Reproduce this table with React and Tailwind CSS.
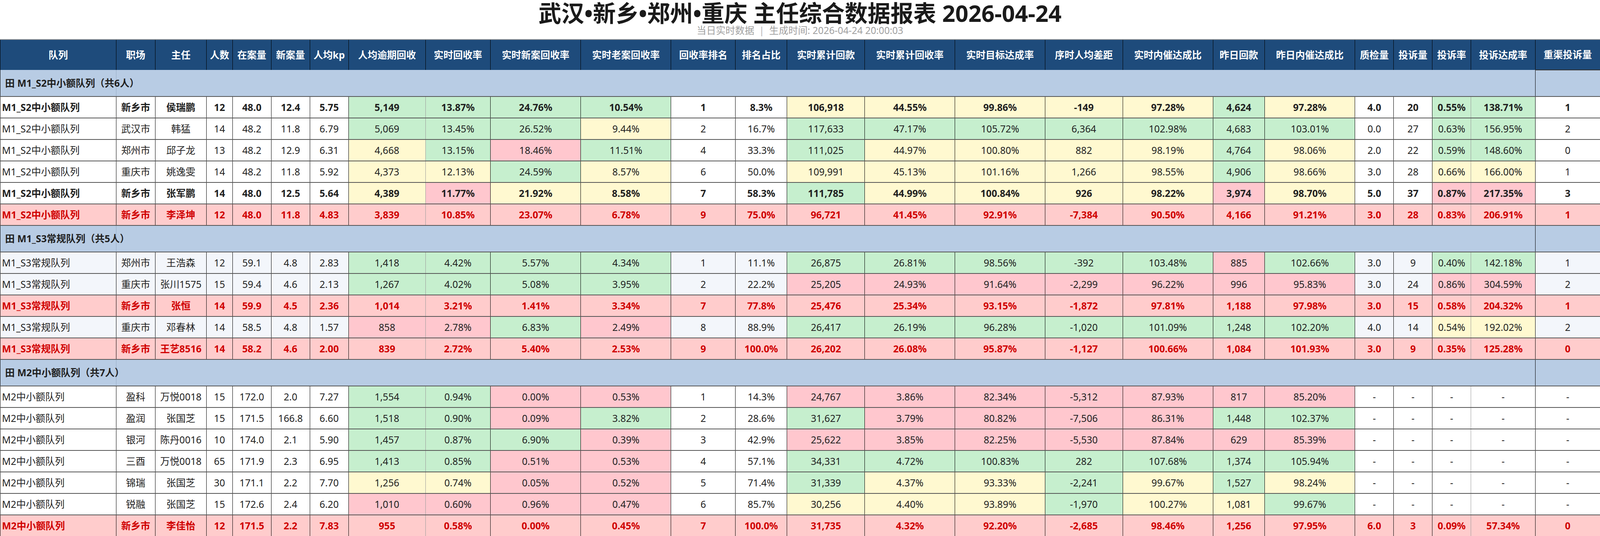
import React from "react";

// 列定义：标题 + 宽度（按 4800 宽的原表换算成百分比）
const COLS = [
  { title: "队列", w: "w-[7.25%]" },
  { title: "职场", w: "w-[2.4375%]" },
  { title: "主任", w: "w-[3.2083%]" },
  { title: "人数", w: "w-[1.625%]" },
  { title: "在案量", w: "w-[2.4167%]" },
  { title: "新案量", w: "w-[2.4167%]" },
  { title: "人均kp", w: "w-[2.4167%]" },
  { title: "人均逾期回收", w: "w-[4.8125%]" },
  { title: "实时回收率", w: "w-[4.0625%]" },
  { title: "实时新案回收率", w: "w-[5.6458%]" },
  { title: "实时老案回收率", w: "w-[5.6458%]" },
  { title: "回收率排名", w: "w-[4.0208%]" },
  { title: "排名占比", w: "w-[3.2292%]" },
  { title: "实时累计回款", w: "w-[4.8542%]" },
  { title: "实时累计回收率", w: "w-[5.6458%]" },
  { title: "实时目标达成率", w: "w-[5.625%]" },
  { title: "序时人均差距", w: "w-[4.8542%]" },
  { title: "实时内催达成比", w: "w-[5.6458%]" },
  { title: "昨日回款", w: "w-[3.2292%]" },
  { title: "昨日内催达成比", w: "w-[5.6458%]" },
  { title: "质检量", w: "w-[2.4167%]" },
  { title: "投诉量", w: "w-[2.4167%]" },
  { title: "投诉率", w: "w-[2.4167%]" },
  { title: "投诉达成率", w: "w-[4.0208%]" },
  { title: "重渠投诉量", w: "w-[4.0417%]" },
];

// 这两列右边框是浅灰色
const SOFT_RIGHT = [7, 22];

const CELL_BG = {
  g: "bg-[#c6efce]",
  y: "bg-[#fff9d0]",
  p: "bg-[#ffc7ce]",
};

// c: 每列底色（. 为默认），kind: bold / red
const GROUPS = [
  {
    name: "M1_S2中小额队列（共6人）",
    tint: false,
    rows: [
      {
        kind: "bold",
        c: ".......gggg..yyyyygy..gg.",
        v: ["M1_S2中小额队列", "新乡市", "侯瑞鹏", "12", "48.0", "12.4", "5.75", "5,149", "13.87%", "24.76%", "10.54%", "1", "8.3%", "106,918", "44.55%", "99.86%", "-149", "97.28%", "4,624", "97.28%", "4.0", "20", "0.55%", "138.71%", "1"],
      },
      {
        c: ".......gggy..ggggggg..gg.",
        v: ["M1_S2中小额队列", "武汉市", "韩猛", "14", "48.2", "11.8", "6.79", "5,069", "13.45%", "26.52%", "9.44%", "2", "16.7%", "117,633", "47.17%", "105.72%", "6,364", "102.98%", "4,683", "103.01%", "0.0", "27", "0.63%", "156.95%", "2"],
      },
      {
        c: ".......ygpg..gyyyygy..gg.",
        v: ["M1_S2中小额队列", "郑州市", "邱子龙", "13", "48.2", "12.9", "6.31", "4,668", "13.15%", "18.46%", "11.51%", "4", "33.3%", "111,025", "44.97%", "100.80%", "882", "98.19%", "4,764", "98.06%", "2.0", "22", "0.59%", "148.60%", "0"],
      },
      {
        c: ".......yygy..yyyyygy..yy.",
        v: ["M1_S2中小额队列", "重庆市", "姚逸雯", "14", "48.2", "11.8", "5.92", "4,373", "12.13%", "24.59%", "8.57%", "6", "50.0%", "109,991", "45.13%", "101.16%", "1,266", "98.55%", "4,906", "98.66%", "3.0", "28", "0.66%", "166.00%", "1"],
      },
      {
        kind: "bold",
        c: ".......ypyy..gyyyypy..pp.",
        v: ["M1_S2中小额队列", "新乡市", "张军鹏", "14", "48.0", "12.5", "5.64", "4,389", "11.77%", "21.92%", "8.58%", "7", "58.3%", "111,785", "44.99%", "100.84%", "926", "98.22%", "3,974", "98.70%", "5.0", "37", "0.87%", "217.35%", "3"],
      },
      {
        kind: "red",
        v: ["M1_S2中小额队列", "新乡市", "李泽坤", "12", "48.0", "11.8", "4.83", "3,839", "10.85%", "23.07%", "6.78%", "9", "75.0%", "96,721", "41.45%", "92.91%", "-7,384", "90.50%", "4,166", "91.21%", "3.0", "28", "0.83%", "206.91%", "1"],
      },
    ],
  },
  {
    name: "M1_S3常规队列（共5人）",
    tint: true,
    rows: [
      {
        c: ".......gggg..gggggpg..gg.",
        v: ["M1_S3常规队列", "郑州市", "王浩森", "12", "59.1", "4.8", "2.83", "1,418", "4.42%", "5.57%", "4.34%", "1", "11.1%", "26,875", "26.81%", "98.56%", "-392", "103.48%", "885", "102.66%", "3.0", "9", "0.40%", "142.18%", "1"],
      },
      {
        c: ".......gggg..ppppppp..pp.",
        v: ["M1_S3常规队列", "重庆市", "张川1575", "15", "59.4", "4.6", "2.13", "1,267", "4.02%", "5.08%", "3.95%", "2", "22.2%", "25,205", "24.93%", "91.64%", "-2,299", "96.22%", "996", "95.83%", "3.0", "24", "0.86%", "304.59%", "2"],
      },
      {
        kind: "red",
        v: ["M1_S3常规队列", "新乡市", "张恒", "14", "59.9", "4.5", "2.36", "1,014", "3.21%", "1.41%", "3.34%", "7", "77.8%", "25,476", "25.34%", "93.15%", "-1,872", "97.81%", "1,188", "97.98%", "3.0", "15", "0.58%", "204.32%", "1"],
      },
      {
        c: ".......ppgp..ggggggg..yy.",
        v: ["M1_S3常规队列", "重庆市", "邓春林", "14", "58.5", "4.8", "1.57", "858", "2.78%", "6.83%", "2.49%", "8", "88.9%", "26,417", "26.19%", "96.28%", "-1,020", "101.09%", "1,248", "102.20%", "4.0", "14", "0.54%", "192.02%", "2"],
      },
      {
        kind: "red",
        v: ["M1_S3常规队列", "新乡市", "王艺8516", "14", "58.2", "4.6", "2.00", "839", "2.72%", "5.40%", "2.53%", "9", "100.0%", "26,202", "26.08%", "95.87%", "-1,127", "100.66%", "1,084", "101.93%", "3.0", "9", "0.35%", "125.28%", "0"],
      },
    ],
  },
  {
    name: "M2中小额队列（共7人）",
    tint: false,
    rows: [
      {
        c: ".......ggpp..ppppppp.....",
        v: ["M2中小额队列", "盈科", "万悦0018", "15", "172.0", "2.0", "7.27", "1,554", "0.94%", "0.00%", "0.53%", "1", "14.3%", "24,767", "3.86%", "82.34%", "-5,312", "87.93%", "817", "85.20%", "-", "-", "-", "-", "-"],
      },
      {
        c: ".......ggpg..gppppgg.....",
        v: ["M2中小额队列", "盈润", "张国芝", "15", "171.5", "166.8", "6.60", "1,518", "0.90%", "0.09%", "3.82%", "2", "28.6%", "31,627", "3.79%", "80.82%", "-7,506", "86.31%", "1,448", "102.37%", "-", "-", "-", "-", "-"],
      },
      {
        c: ".......gggp..ppppppp.....",
        v: ["M2中小额队列", "银河", "陈丹0016", "10", "174.0", "2.1", "5.90", "1,457", "0.87%", "6.90%", "0.39%", "3", "42.9%", "25,622", "3.85%", "82.25%", "-5,530", "87.84%", "629", "85.39%", "-", "-", "-", "-", "-"],
      },
      {
        c: ".......ggpp..ggggggg.....",
        v: ["M2中小额队列", "三酉", "万悦0018", "65", "171.9", "2.3", "6.95", "1,413", "0.85%", "0.51%", "0.53%", "4", "57.1%", "34,331", "4.72%", "100.83%", "282", "107.68%", "1,374", "105.94%", "-", "-", "-", "-", "-"],
      },
      {
        c: ".......yypp..gyygygy.....",
        v: ["M2中小额队列", "锦瑞", "张国芝", "30", "171.1", "2.2", "7.70", "1,256", "0.74%", "0.05%", "0.52%", "5", "71.4%", "31,339", "4.37%", "93.33%", "-2,241", "99.67%", "1,527", "98.24%", "-", "-", "-", "-", "-"],
      },
      {
        c: ".......pppp..yyygyyg.....",
        v: ["M2中小额队列", "锐融", "张国芝", "15", "172.6", "2.4", "6.20", "1,010", "0.60%", "0.96%", "0.47%", "6", "85.7%", "30,256", "4.40%", "93.89%", "-1,970", "100.27%", "1,081", "99.67%", "-", "-", "-", "-", "-"],
      },
      {
        kind: "red",
        v: ["M2中小额队列", "新乡市", "李佳怡", "12", "171.5", "2.2", "7.83", "955", "0.58%", "0.00%", "0.45%", "7", "100.0%", "31,735", "4.32%", "92.20%", "-2,685", "98.46%", "1,256", "97.95%", "6.0", "3", "0.09%", "57.34%", "0"],
      },
    ],
  },
];

function DataRow({ row, tint }) {
  const isRed = row.kind === "red";
  const text = isRed
    ? "font-bold text-[#d00000]"
    : row.kind === "bold"
    ? "font-bold text-[#1f1f1f]"
    : "text-[#222]";

  return (
    <tr className="h-[55px]">
      {row.v.map((val, i) => {
        let bg = tint ? "bg-[#f3f6fb]" : "bg-white";
        if (isRed) bg = "bg-[#ffcccc]";
        else if (row.c && CELL_BG[row.c[i]]) bg = CELL_BG[row.c[i]];

        const right =
          i === COLS.length - 1
            ? ""
            : SOFT_RIGHT.includes(i)
            ? "border-r border-r-[#9a9a9a]"
            : "border-r border-r-black";

        return (
          <td
            key={i}
            className={`${bg} ${right} ${text} ${
              i === 0 ? "text-left pl-[4px] border-l border-l-black" : "text-center"
            } border-b-2 border-b-[#555] whitespace-nowrap overflow-hidden`}
          >
            {val}
          </td>
        );
      })}
    </tr>
  );
}

function GroupRow({ name }) {
  return (
    <tr className="h-[68px]">
      <td className="bg-[#b8cce4] border-b-2 border-b-[#555] border-r border-r-[#97aac4] border-l border-l-black pl-[12px] text-left font-bold text-[#1f1f1f] whitespace-nowrap">
        田 {name}
      </td>
      <td colSpan={23} className="bg-[#b8cce4] border-b-2 border-b-[#555] border-r border-r-black" />
      <td className="bg-[#b8cce4] border-b-2 border-b-[#555] border-t-2 border-t-[#333]" />
    </tr>
  );
}

export default function App() {
  return (
    <div className="w-full bg-white font-['Noto_Sans','Noto_Sans_CJK_SC',sans-serif]">
      <h1 className="pt-[4px] text-center text-[1.43vw] leading-[58px] font-bold text-[#1a1a1a]">
        武汉•新乡•郑州•重庆 主任综合数据报表 2026-04-24
      </h1>
      <p className="mb-[6px] text-center text-[0.6vw] leading-[32px] text-[#a0a0a0]">
        当日实时数据<span className="mx-[0.3vw] text-[#b5b5b5]">|</span>生成时间: 2026-04-24 20:00:03
      </p>

      <table className="w-full table-fixed border-collapse text-[0.604vw] border-t-2 border-t-[#9a9a9a]">
        <colgroup>
          {COLS.map((col) => (
            <col key={col.title} className={col.w} />
          ))}
        </colgroup>
        <thead>
          <tr className="h-[78px]">
            {COLS.map((col, i) => (
              <th
                key={col.title}
                className={`bg-[#1e4b7b] text-white font-bold text-center whitespace-nowrap ${
                  i === COLS.length - 1 ? "" : "border-r border-r-black"
                } ${i === 0 ? "border-l border-l-black" : ""}`}
              >
                {col.title}
              </th>
            ))}
          </tr>
        </thead>
        <tbody>
          {GROUPS.map((g) => (
            <React.Fragment key={g.name}>
              <GroupRow name={g.name} />
              {g.rows.map((row, idx) => (
                <DataRow key={idx} row={row} tint={g.tint} />
              ))}
            </React.Fragment>
          ))}
        </tbody>
      </table>
    </div>
  );
}
